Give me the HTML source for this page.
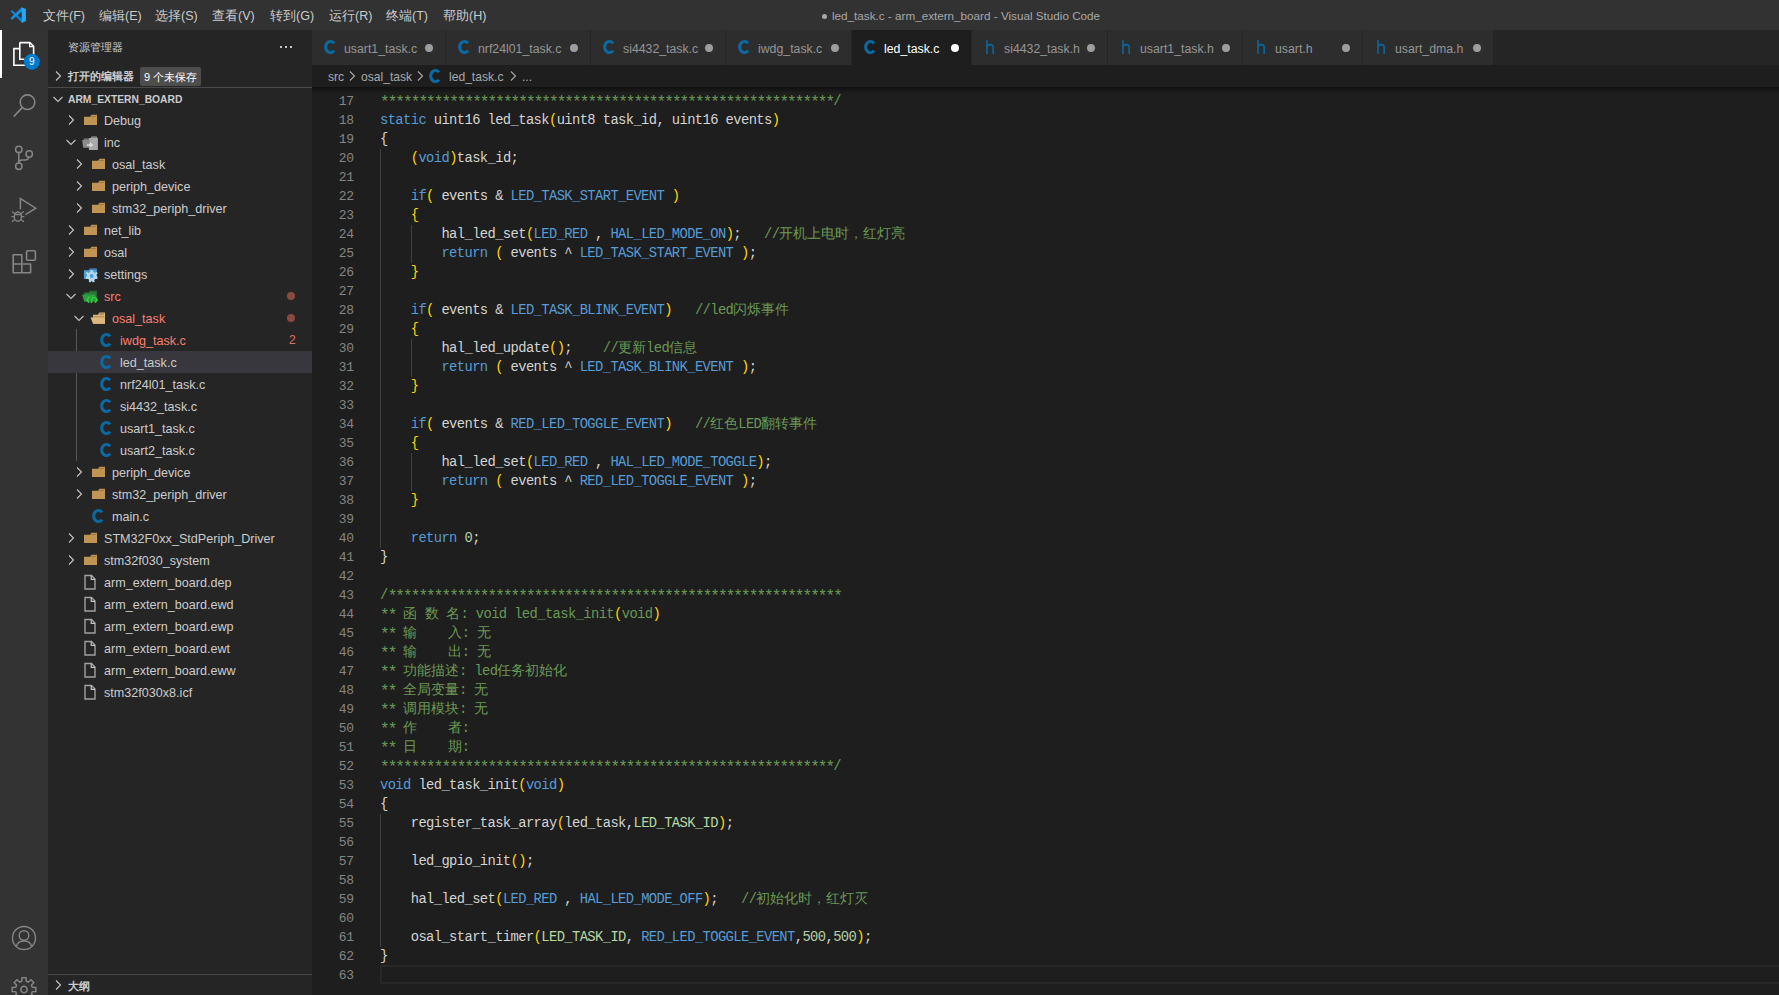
<!DOCTYPE html>
<html><head><meta charset="utf-8"><title>led_task.c - Visual Studio Code</title>
<style>
*{margin:0;padding:0;box-sizing:border-box}
html,body{width:1779px;height:995px;overflow:hidden;background:#1e1e1e;font-family:"Liberation Sans",sans-serif}
.ic{position:absolute;overflow:visible}
.cj{display:inline-block;white-space:nowrap;overflow:visible}
#title{position:absolute;left:0;top:0;width:1779px;height:30px;background:#323233}
.mi{position:absolute;top:1px;height:30px;line-height:30px;font-size:12.5px;color:#cccccc;white-space:nowrap}
#wtitle{position:absolute;left:821px;top:0px;width:280px;height:30px;line-height:31px;font-size:11.7px;color:#a8a8a8;white-space:nowrap}
#act{position:absolute;left:0;top:30px;width:48px;height:965px;background:#333333}
#side{position:absolute;left:48px;top:30px;width:264px;height:965px;background:#252526}
.tt{position:absolute;height:22px;line-height:24px;font-size:12.6px;white-space:nowrap}
.sel{position:absolute;left:48px;width:264px;height:22px;background:#37373d}
.gdot{position:absolute;left:287px;width:8px;height:8px;border-radius:4px;background:#8b4a40}
.tnum{position:absolute;left:289px;height:22px;line-height:22px;font-size:12px;color:#e07060}
.cico{position:absolute;font-family:"Liberation Sans",sans-serif;font-weight:bold;font-size:17px;line-height:22px;color:#0e70ad}
.hico{position:absolute;font-family:"Liberation Sans",sans-serif;font-size:17px;line-height:20px;color:#0b68a0}
#tabbar{position:absolute;left:312px;top:30px;width:1467px;height:35px;background:#252526}
.tab{position:absolute;top:30px;height:35px;background:#2d2d2d}
.tab.act{background:#1e1e1e}
.tabt{position:absolute;top:2px;line-height:35px;font-size:12.3px;color:#969696;white-space:nowrap}
.tab.act .tabt{color:#ffffff}
.tdot{position:absolute;top:14px;width:8px;height:8px;border-radius:4px;background:#9d9d9d}
.tab.act .tdot{background:#ffffff}
#crumb{position:absolute;left:312px;top:65px;width:1467px;height:22px;background:#1e1e1e;font-size:12.1px;color:#a9a9a9;line-height:24px;white-space:nowrap}
#editor{position:absolute;left:312px;top:87px;width:1467px;height:908px;background:#1e1e1e;overflow:hidden}
.ln{position:absolute;left:312px;width:42px;text-align:right;height:19px;line-height:19px;font-family:"Liberation Mono",monospace;font-size:13px;letter-spacing:-0.12px;color:#858585}
.cl{position:absolute;left:380px;height:19px;line-height:19px;font-family:"Liberation Mono",monospace;font-size:13.8px;letter-spacing:-0.6px;color:#d4d4d4;white-space:pre}
.cl .cj{letter-spacing:0;font-size:14px}
.kw,.mc{color:#569cd6}
.cm{color:#6a9955}
.nu{color:#b5cea8}
.en{color:#b8d7a3}
.br{color:#ffd700}
.ig{position:absolute;width:1px;background:#404040}
.ast{font-size:16px;letter-spacing:-1.92px;position:relative;top:2px}
</style></head><body>
<div id="title">
 <svg class="ic" style="left:0;top:0" width="40" height="30" viewBox="0 0 40 30">
  <path d="M10.4 11.2 L12.3 10 L22.2 19.3 L22.2 23 Z" fill="#0e80cc"/>
  <path d="M21.8 7.2 L22.2 11.2 L12.3 19.8 L10.4 18.3 Z" fill="#1490dd"/>
  <path d="M21.7 7.2 L25.9 9.1 V20.9 L21.7 22.9 Z" fill="#24a8f2"/>
 </svg>
 <div class="mi" style="left:43px"><span class="cj" style="width:26px">文件</span>(F)</div><div class="mi" style="left:99px"><span class="cj" style="width:26px">编辑</span>(E)</div><div class="mi" style="left:155px"><span class="cj" style="width:26px">选择</span>(S)</div><div class="mi" style="left:212px"><span class="cj" style="width:26px">查看</span>(V)</div><div class="mi" style="left:270px"><span class="cj" style="width:26px">转到</span>(G)</div><div class="mi" style="left:329px"><span class="cj" style="width:26px">运行</span>(R)</div><div class="mi" style="left:386px"><span class="cj" style="width:26px">终端</span>(T)</div><div class="mi" style="left:443px"><span class="cj" style="width:26px">帮助</span>(H)</div>
 <div style="position:absolute;left:822px;top:14px;width:5px;height:5px;border-radius:3px;background:#a8a8a8"></div><div id="wtitle" style="left:832px">led_task.c - arm_extern_board - Visual Studio Code</div>
</div>

<div id="act">
 <div style="position:absolute;left:0;top:0;width:2px;height:48px;background:#fff"></div>
 <svg class="ic" style="left:0;top:0" width="48" height="48" viewBox="0 0 48 48">
  <path d="M13.8 18.5 H19.5 M13.8 18.5 V64.5 M13.8 64.5" fill="none"/>
  <path d="M19.8 18.6 H13.9 V35.2 H25" fill="none" stroke="#fff" stroke-width="1.6"/>
  <path d="M19.8 12.6 H29.8 L33.6 16.4 V29 M19.8 12.6 V29.2 H24.5" fill="none" stroke="#fff" stroke-width="1.6"/>
  <path d="M29.6 12.8 V16.6 H33.4" fill="none" stroke="#fff" stroke-width="1.2"/>
  <circle cx="31.8" cy="31.8" r="8" fill="#007acc"/>
  <text x="31.8" y="35.4" text-anchor="middle" font-family="Liberation Sans" font-size="10" fill="#fff">9</text>
 </svg>
 <svg class="ic" style="left:0;top:50px" width="48" height="48" viewBox="0 0 48 48">
  <circle cx="27.5" cy="22.2" r="7.3" fill="none" stroke="#858585" stroke-width="1.6"/>
  <path d="M22.2 27.6 L13.8 36.5" stroke="#858585" stroke-width="1.8"/>
 </svg>
 <svg class="ic" style="left:0;top:102px" width="48" height="48" viewBox="0 0 48 48">
  <circle cx="18.8" cy="17.4" r="3.2" fill="none" stroke="#858585" stroke-width="1.5"/>
  <circle cx="18.8" cy="34.2" r="3.2" fill="none" stroke="#858585" stroke-width="1.5"/>
  <circle cx="29.2" cy="22" r="3.2" fill="none" stroke="#858585" stroke-width="1.5"/>
  <path d="M18.8 20.6 V31 M28.8 25.2 Q28.3 28 25.5 28 H22 Q19 28 19 30.5" fill="none" stroke="#858585" stroke-width="1.5"/>
 </svg>
 <svg class="ic" style="left:0;top:155px" width="48" height="48" viewBox="0 0 48 48">
  <path d="M20.4 24.3 V13.6 L35.8 23.2 L25.4 29.6" fill="none" stroke="#858585" stroke-width="1.5"/>
  <ellipse cx="17.9" cy="31.6" rx="3.6" ry="4.6" fill="none" stroke="#858585" stroke-width="1.4"/>
  <path d="M14.4 29.5 H21.4 M12 26.5 L14.6 28.4 M23.8 26.5 L21.2 28.4 M11.5 31.6 H14.3 M21.5 31.6 H24.3 M12 36.6 L14.6 34.8 M23.8 36.6 L21.2 34.8" fill="none" stroke="#858585" stroke-width="1.3"/>
 </svg>
 <svg class="ic" style="left:0;top:208px" width="48" height="48" viewBox="0 0 48 48">
  <path d="M13.2 16.7 H21.8 V26 H30.6 V34.8 H13.2 Z M13.2 26 H21.8 V34.8" fill="none" stroke="#858585" stroke-width="1.6" stroke-linejoin="round"/>
  <rect x="26.6" y="12.8" width="8.8" height="9.4" rx="1" fill="none" stroke="#858585" stroke-width="1.6"/>
 </svg>
 <svg class="ic" style="left:0;top:884px" width="48" height="48" viewBox="0 0 48 48">
  <circle cx="24" cy="24" r="11.5" fill="none" stroke="#858585" stroke-width="1.4"/>
  <circle cx="24" cy="21.5" r="4.8" fill="none" stroke="#858585" stroke-width="1.4"/>
  <path d="M16.4 32.5 Q17.5 27 24 27 Q30.5 27 31.6 32.5" fill="none" stroke="#858585" stroke-width="1.4"/>
 </svg>
 <svg class="ic" style="left:0;top:935px" width="48" height="48" viewBox="0 0 48 48">
  <g transform="translate(24 24.5)">
   <path d="M-2.23 -8.31 L-1.98 -11.84 L1.98 -11.84 L2.23 -8.31 L4.30 -7.45 L6.97 -9.77 L9.77 -6.97 L7.45 -4.30 L8.31 -2.23 L11.84 -1.98 L11.84 1.98 L8.31 2.23 L7.45 4.30 L9.77 6.97 L6.97 9.77 L4.30 7.45 L2.23 8.31 L1.98 11.84 L-1.98 11.84 L-2.23 8.31 L-4.30 7.45 L-6.97 9.77 L-9.77 6.97 L-7.45 4.30 L-8.31 2.23 L-11.84 1.98 L-11.84 -1.98 L-8.31 -2.23 L-7.45 -4.30 L-9.77 -6.97 L-6.97 -9.77 L-4.30 -7.45 Z" fill="none" stroke="#858585" stroke-width="1.5" stroke-linejoin="miter"/>
   <circle cx="0" cy="0" r="3.2" fill="none" stroke="#858585" stroke-width="1.5"/>
  </g>
 </svg>
</div>
<div id="side">
 <div style="position:absolute;left:20px;top:0;height:35px;line-height:35px;font-size:11px;color:#cccccc"><span class="cj" style="width:55px">资源管理器</span></div>
 <div style="position:absolute;left:232px;top:16px;width:2px;height:2px;background:#c5c5c5;box-shadow:5px 0 0 #c5c5c5,10px 0 0 #c5c5c5"></div>
</div>
<svg class="ic" style="left:50px;top:68px" width="16" height="16" viewBox="0 0 16 16"><path d="M6 3.5 L10.5 8 L6 12.5" fill="none" stroke="#c5c5c5" stroke-width="1.1"/></svg>
<div style="position:absolute;left:68px;top:65px;height:22px;line-height:22px;font-size:11px;font-weight:bold;color:#cccccc"><span class="cj" style="width:66px">打开的编辑器</span></div>
<div style="position:absolute;left:140px;top:67px;width:61px;height:19px;background:#4d4d4d;border-radius:2px;font-size:11px;line-height:20px;color:#ffffff;padding-left:4px;white-space:nowrap">9 <span class="cj" style="width:46px">个未保存</span></div>
<div style="position:absolute;left:48px;top:87px;width:264px;height:1px;background:#4a4a4a"></div>
<svg class="ic" style="left:50px;top:91px" width="16" height="16" viewBox="0 0 16 16"><path d="M3.5 6 L8 10.5 L12.5 6" fill="none" stroke="#c5c5c5" stroke-width="1.1"/></svg>
<div style="position:absolute;left:68px;top:89px;height:22px;line-height:22px;font-size:10.3px;font-weight:bold;color:#cccccc">ARM_EXTERN_BOARD</div>
<div style="position:absolute;left:76px;top:329px;width:1px;height:132px;background:#585858"></div>
<svg class="ic" style="left:63px;top:112px" width="16" height="16" viewBox="0 0 16 16"><path d="M6 3.5 L10.5 8 L6 12.5" fill="none" stroke="#c5c5c5" stroke-width="1.1"/></svg><svg class="ic" style="left:82px;top:112px" width="16" height="16" viewBox="0 0 16 16"><path d="M2 4.8 H8.2 L9.4 2.7 H15 V13 H2 Z" fill="#c09553"/><path d="M9.6 3.9 H14 V4.7 H9.2z" fill="#8e7040"/></svg><div class="tt" style="left:104px;top:109px;color:#cccccc">Debug</div><svg class="ic" style="left:63px;top:134px" width="16" height="16" viewBox="0 0 16 16"><path d="M3.5 6 L8 10.5 L12.5 6" fill="none" stroke="#c5c5c5" stroke-width="1.1"/></svg><svg class="ic" style="left:82px;top:134px" width="16" height="16" viewBox="0 0 16 16"><path d="M6.9 4 H8.9 L9.6 2.6 H14.9 V4 H15.9 V15.9 H6.9 Z" fill="#a9a9a9"/><path d="M9.8 3.2 H14.4 V3.9 H9.8z" fill="#6e6e6e"/><path d="M0.2 6 H1.5 L2.2 4.6 H7.3 V13.7 H1.2 Z" fill="#8c8c8c"/><path d="M2.3 5.3 H6.6 V6 H2.3z" fill="#5e5e5e"/><path d="M4.9 10.9 H9.6 M8 9.2 L10.2 10.9 L8 12.6" stroke="#dadada" stroke-width="1.5" fill="none"/></svg><div class="tt" style="left:104px;top:131px;color:#cccccc">inc</div><svg class="ic" style="left:71px;top:156px" width="16" height="16" viewBox="0 0 16 16"><path d="M6 3.5 L10.5 8 L6 12.5" fill="none" stroke="#c5c5c5" stroke-width="1.1"/></svg><svg class="ic" style="left:90px;top:156px" width="16" height="16" viewBox="0 0 16 16"><path d="M2 4.8 H8.2 L9.4 2.7 H15 V13 H2 Z" fill="#c09553"/><path d="M9.6 3.9 H14 V4.7 H9.2z" fill="#8e7040"/></svg><div class="tt" style="left:112px;top:153px;color:#cccccc">osal_task</div><svg class="ic" style="left:71px;top:178px" width="16" height="16" viewBox="0 0 16 16"><path d="M6 3.5 L10.5 8 L6 12.5" fill="none" stroke="#c5c5c5" stroke-width="1.1"/></svg><svg class="ic" style="left:90px;top:178px" width="16" height="16" viewBox="0 0 16 16"><path d="M2 4.8 H8.2 L9.4 2.7 H15 V13 H2 Z" fill="#c09553"/><path d="M9.6 3.9 H14 V4.7 H9.2z" fill="#8e7040"/></svg><div class="tt" style="left:112px;top:175px;color:#cccccc">periph_device</div><svg class="ic" style="left:71px;top:200px" width="16" height="16" viewBox="0 0 16 16"><path d="M6 3.5 L10.5 8 L6 12.5" fill="none" stroke="#c5c5c5" stroke-width="1.1"/></svg><svg class="ic" style="left:90px;top:200px" width="16" height="16" viewBox="0 0 16 16"><path d="M2 4.8 H8.2 L9.4 2.7 H15 V13 H2 Z" fill="#c09553"/><path d="M9.6 3.9 H14 V4.7 H9.2z" fill="#8e7040"/></svg><div class="tt" style="left:112px;top:197px;color:#cccccc">stm32_periph_driver</div><svg class="ic" style="left:63px;top:222px" width="16" height="16" viewBox="0 0 16 16"><path d="M6 3.5 L10.5 8 L6 12.5" fill="none" stroke="#c5c5c5" stroke-width="1.1"/></svg><svg class="ic" style="left:82px;top:222px" width="16" height="16" viewBox="0 0 16 16"><path d="M2 4.8 H8.2 L9.4 2.7 H15 V13 H2 Z" fill="#c09553"/><path d="M9.6 3.9 H14 V4.7 H9.2z" fill="#8e7040"/></svg><div class="tt" style="left:104px;top:219px;color:#cccccc">net_lib</div><svg class="ic" style="left:63px;top:244px" width="16" height="16" viewBox="0 0 16 16"><path d="M6 3.5 L10.5 8 L6 12.5" fill="none" stroke="#c5c5c5" stroke-width="1.1"/></svg><svg class="ic" style="left:82px;top:244px" width="16" height="16" viewBox="0 0 16 16"><path d="M2 4.8 H8.2 L9.4 2.7 H15 V13 H2 Z" fill="#c09553"/><path d="M9.6 3.9 H14 V4.7 H9.2z" fill="#8e7040"/></svg><div class="tt" style="left:104px;top:241px;color:#cccccc">osal</div><svg class="ic" style="left:63px;top:266px" width="16" height="16" viewBox="0 0 16 16"><path d="M6 3.5 L10.5 8 L6 12.5" fill="none" stroke="#c5c5c5" stroke-width="1.1"/></svg><svg class="ic" style="left:82px;top:266px" width="16" height="16" viewBox="0 0 16 16"><path d="M1.9 4.2 H6.8 L7.8 2.5 H14.8 V13 H1.9 Z" fill="#4b9fd6"/><path d="M8 3.3 H14.2 V4 H8z" fill="#2f78a8"/><g transform="translate(9.7 10)"><path d="M-1.2 -5.8 H1.2 L1.6 -3.9 L3.3 -3.1 L4.9 -4.2 L6 -2.6 L4.6 -1.2 L4.8 0 L6 1.2 L5.3 2.9 L3.4 2.9 L2.6 4.3 L2.9 6 L1 6.2 L0 4.8 L-1 6.2 L-2.9 6 L-2.6 4.3 L-3.4 2.9 L-5.3 2.9 L-6 1.2 L-4.8 0 L-4.6 -1.2 L-6 -2.6 L-4.9 -4.2 L-3.3 -3.1 L-1.6 -3.9 Z" fill="#b3d7ee"/><circle r="1.9" fill="#4b9fd6"/></g></svg><div class="tt" style="left:104px;top:263px;color:#cccccc">settings</div><svg class="ic" style="left:63px;top:288px" width="16" height="16" viewBox="0 0 16 16"><path d="M3.5 6 L8 10.5 L12.5 6" fill="none" stroke="#c5c5c5" stroke-width="1.1"/></svg><svg class="ic" style="left:82px;top:288px" width="16" height="16" viewBox="0 0 16 16"><path d="M2.2 4.6 H7 L8 2.7 H14.8 V13.6 H2.2 Z" fill="#2a7a36"/><path d="M8.2 3.5 H14.2 V4.2 H8.2z" fill="#1d5a28"/><path d="M0.1 6.6 H12.6 L14.8 13.6 H2.2 Z" fill="#339944"/><path d="M7.2 9 L4.9 11.9 L7.2 14.8 M12.9 9 L15.2 11.9 L12.9 14.8 M10.9 8.6 L9.3 15.2" stroke="#1fe02f" stroke-width="1.4" fill="none"/></svg><div class="tt" style="left:104px;top:285px;color:#f88070">src</div><div class="gdot" style="top:292px"></div><svg class="ic" style="left:71px;top:310px" width="16" height="16" viewBox="0 0 16 16"><path d="M3.5 6 L8 10.5 L12.5 6" fill="none" stroke="#c5c5c5" stroke-width="1.1"/></svg><svg class="ic" style="left:90px;top:310px" width="16" height="16" viewBox="0 0 16 16"><path d="M3 4.8 H8 L9.2 2.5 H15 V13.8 H3 Z" fill="#dcb67a"/><path d="M9.4 3.6 H14 V4.4 H9z M3.6 6.4 H14.2 V7.2 H3.6z" fill="#8e7040"/><path d="M0.5 7.6 H12.4 L15 13.8 H3 Z" fill="#dcb67a"/></svg><div class="tt" style="left:112px;top:307px;color:#f88070">osal_task</div><div class="gdot" style="top:314px"></div><svg class="ic" style="left:98px;top:329px" width="16" height="22" viewBox="0 0 16 22"><path d="M13.4 6.7 A6.3 7 0 1 0 13.4 15.3 L10.5 14 A3.1 4 0 1 1 10.5 8 Z" fill="#0b6aa3"/></svg><div class="tt" style="left:120px;top:329px;color:#f88070">iwdg_task.c</div><div class="tnum" style="top:329px">2</div><div class="sel" style="top:351px"></div><svg class="ic" style="left:98px;top:351px" width="16" height="22" viewBox="0 0 16 22"><path d="M13.4 6.7 A6.3 7 0 1 0 13.4 15.3 L10.5 14 A3.1 4 0 1 1 10.5 8 Z" fill="#0b6aa3"/></svg><div class="tt" style="left:120px;top:351px;color:#cccccc">led_task.c</div><svg class="ic" style="left:98px;top:373px" width="16" height="22" viewBox="0 0 16 22"><path d="M13.4 6.7 A6.3 7 0 1 0 13.4 15.3 L10.5 14 A3.1 4 0 1 1 10.5 8 Z" fill="#0b6aa3"/></svg><div class="tt" style="left:120px;top:373px;color:#cccccc">nrf24l01_task.c</div><svg class="ic" style="left:98px;top:395px" width="16" height="22" viewBox="0 0 16 22"><path d="M13.4 6.7 A6.3 7 0 1 0 13.4 15.3 L10.5 14 A3.1 4 0 1 1 10.5 8 Z" fill="#0b6aa3"/></svg><div class="tt" style="left:120px;top:395px;color:#cccccc">si4432_task.c</div><svg class="ic" style="left:98px;top:417px" width="16" height="22" viewBox="0 0 16 22"><path d="M13.4 6.7 A6.3 7 0 1 0 13.4 15.3 L10.5 14 A3.1 4 0 1 1 10.5 8 Z" fill="#0b6aa3"/></svg><div class="tt" style="left:120px;top:417px;color:#cccccc">usart1_task.c</div><svg class="ic" style="left:98px;top:439px" width="16" height="22" viewBox="0 0 16 22"><path d="M13.4 6.7 A6.3 7 0 1 0 13.4 15.3 L10.5 14 A3.1 4 0 1 1 10.5 8 Z" fill="#0b6aa3"/></svg><div class="tt" style="left:120px;top:439px;color:#cccccc">usart2_task.c</div><svg class="ic" style="left:71px;top:464px" width="16" height="16" viewBox="0 0 16 16"><path d="M6 3.5 L10.5 8 L6 12.5" fill="none" stroke="#c5c5c5" stroke-width="1.1"/></svg><svg class="ic" style="left:90px;top:464px" width="16" height="16" viewBox="0 0 16 16"><path d="M2 4.8 H8.2 L9.4 2.7 H15 V13 H2 Z" fill="#c09553"/><path d="M9.6 3.9 H14 V4.7 H9.2z" fill="#8e7040"/></svg><div class="tt" style="left:112px;top:461px;color:#cccccc">periph_device</div><svg class="ic" style="left:71px;top:486px" width="16" height="16" viewBox="0 0 16 16"><path d="M6 3.5 L10.5 8 L6 12.5" fill="none" stroke="#c5c5c5" stroke-width="1.1"/></svg><svg class="ic" style="left:90px;top:486px" width="16" height="16" viewBox="0 0 16 16"><path d="M2 4.8 H8.2 L9.4 2.7 H15 V13 H2 Z" fill="#c09553"/><path d="M9.6 3.9 H14 V4.7 H9.2z" fill="#8e7040"/></svg><div class="tt" style="left:112px;top:483px;color:#cccccc">stm32_periph_driver</div><svg class="ic" style="left:90px;top:505px" width="16" height="22" viewBox="0 0 16 22"><path d="M13.4 6.7 A6.3 7 0 1 0 13.4 15.3 L10.5 14 A3.1 4 0 1 1 10.5 8 Z" fill="#0b6aa3"/></svg><div class="tt" style="left:112px;top:505px;color:#cccccc">main.c</div><svg class="ic" style="left:63px;top:530px" width="16" height="16" viewBox="0 0 16 16"><path d="M6 3.5 L10.5 8 L6 12.5" fill="none" stroke="#c5c5c5" stroke-width="1.1"/></svg><svg class="ic" style="left:82px;top:530px" width="16" height="16" viewBox="0 0 16 16"><path d="M2 4.8 H8.2 L9.4 2.7 H15 V13 H2 Z" fill="#c09553"/><path d="M9.6 3.9 H14 V4.7 H9.2z" fill="#8e7040"/></svg><div class="tt" style="left:104px;top:527px;color:#cccccc">STM32F0xx_StdPeriph_Driver</div><svg class="ic" style="left:63px;top:552px" width="16" height="16" viewBox="0 0 16 16"><path d="M6 3.5 L10.5 8 L6 12.5" fill="none" stroke="#c5c5c5" stroke-width="1.1"/></svg><svg class="ic" style="left:82px;top:552px" width="16" height="16" viewBox="0 0 16 16"><path d="M2 4.8 H8.2 L9.4 2.7 H15 V13 H2 Z" fill="#c09553"/><path d="M9.6 3.9 H14 V4.7 H9.2z" fill="#8e7040"/></svg><div class="tt" style="left:104px;top:549px;color:#cccccc">stm32f030_system</div><svg class="ic" style="left:82px;top:574px" width="16" height="16" viewBox="0 0 16 16"><path d="M3 1.5 H9.5 L13 5 V15 H3 Z" fill="none" stroke="#a0a0a0" stroke-width="1.4"/><path d="M9.2 1.5 V5.3 H13" fill="none" stroke="#c5c5c5" stroke-width="1.2"/></svg><div class="tt" style="left:104px;top:571px;color:#cccccc">arm_extern_board.dep</div><svg class="ic" style="left:82px;top:596px" width="16" height="16" viewBox="0 0 16 16"><path d="M3 1.5 H9.5 L13 5 V15 H3 Z" fill="none" stroke="#a0a0a0" stroke-width="1.4"/><path d="M9.2 1.5 V5.3 H13" fill="none" stroke="#c5c5c5" stroke-width="1.2"/></svg><div class="tt" style="left:104px;top:593px;color:#cccccc">arm_extern_board.ewd</div><svg class="ic" style="left:82px;top:618px" width="16" height="16" viewBox="0 0 16 16"><path d="M3 1.5 H9.5 L13 5 V15 H3 Z" fill="none" stroke="#a0a0a0" stroke-width="1.4"/><path d="M9.2 1.5 V5.3 H13" fill="none" stroke="#c5c5c5" stroke-width="1.2"/></svg><div class="tt" style="left:104px;top:615px;color:#cccccc">arm_extern_board.ewp</div><svg class="ic" style="left:82px;top:640px" width="16" height="16" viewBox="0 0 16 16"><path d="M3 1.5 H9.5 L13 5 V15 H3 Z" fill="none" stroke="#a0a0a0" stroke-width="1.4"/><path d="M9.2 1.5 V5.3 H13" fill="none" stroke="#c5c5c5" stroke-width="1.2"/></svg><div class="tt" style="left:104px;top:637px;color:#cccccc">arm_extern_board.ewt</div><svg class="ic" style="left:82px;top:662px" width="16" height="16" viewBox="0 0 16 16"><path d="M3 1.5 H9.5 L13 5 V15 H3 Z" fill="none" stroke="#a0a0a0" stroke-width="1.4"/><path d="M9.2 1.5 V5.3 H13" fill="none" stroke="#c5c5c5" stroke-width="1.2"/></svg><div class="tt" style="left:104px;top:659px;color:#cccccc">arm_extern_board.eww</div><svg class="ic" style="left:82px;top:684px" width="16" height="16" viewBox="0 0 16 16"><path d="M3 1.5 H9.5 L13 5 V15 H3 Z" fill="none" stroke="#a0a0a0" stroke-width="1.4"/><path d="M9.2 1.5 V5.3 H13" fill="none" stroke="#c5c5c5" stroke-width="1.2"/></svg><div class="tt" style="left:104px;top:681px;color:#cccccc">stm32f030x8.icf</div>
<div style="position:absolute;left:48px;top:974px;width:264px;height:1px;background:#4a4a4a"></div>
<svg class="ic" style="left:50px;top:977px" width="16" height="16" viewBox="0 0 16 16"><path d="M6 3.5 L10.5 8 L6 12.5" fill="none" stroke="#c5c5c5" stroke-width="1.1"/></svg>
<div style="position:absolute;left:68px;top:975px;height:22px;line-height:22px;font-size:11px;font-weight:bold;color:#cccccc"><span class="cj" style="width:24px">大纲</span></div>

<div id="tabbar"></div>
<div class="tab" style="left:312px;width:133px"><svg class="ic" style="left:10px;top:6px" width="16" height="22" viewBox="0 0 16 22"><path d="M13.4 6.7 A6.3 7 0 1 0 13.4 15.3 L10.5 14 A3.1 4 0 1 1 10.5 8 Z" fill="#0b6aa3"/></svg><span class="tabt" style="left:32px">usart1_task.c</span><span class="tdot" style="left:113px"></span></div><div class="tab" style="left:446px;width:144px"><svg class="ic" style="left:10px;top:6px" width="16" height="22" viewBox="0 0 16 22"><path d="M13.4 6.7 A6.3 7 0 1 0 13.4 15.3 L10.5 14 A3.1 4 0 1 1 10.5 8 Z" fill="#0b6aa3"/></svg><span class="tabt" style="left:32px">nrf24l01_task.c</span><span class="tdot" style="left:124px"></span></div><div class="tab" style="left:591px;width:134px"><svg class="ic" style="left:10px;top:6px" width="16" height="22" viewBox="0 0 16 22"><path d="M13.4 6.7 A6.3 7 0 1 0 13.4 15.3 L10.5 14 A3.1 4 0 1 1 10.5 8 Z" fill="#0b6aa3"/></svg><span class="tabt" style="left:32px">si4432_task.c</span><span class="tdot" style="left:114px"></span></div><div class="tab" style="left:726px;width:125px"><svg class="ic" style="left:10px;top:6px" width="16" height="22" viewBox="0 0 16 22"><path d="M13.4 6.7 A6.3 7 0 1 0 13.4 15.3 L10.5 14 A3.1 4 0 1 1 10.5 8 Z" fill="#0b6aa3"/></svg><span class="tabt" style="left:32px">iwdg_task.c</span><span class="tdot" style="left:105px"></span></div><div class="tab act" style="left:852px;width:119px"><svg class="ic" style="left:10px;top:6px" width="16" height="22" viewBox="0 0 16 22"><path d="M13.4 6.7 A6.3 7 0 1 0 13.4 15.3 L10.5 14 A3.1 4 0 1 1 10.5 8 Z" fill="#0b6aa3"/></svg><span class="tabt" style="left:32px">led_task.c</span><span class="tdot" style="left:99px"></span></div><div class="tab" style="left:972px;width:135px"><svg class="ic" style="left:12px;top:9px" width="12" height="16" viewBox="0 0 12 16"><path d="M3 1 V15 M3 8.5 Q3 5.6 6.2 5.6 Q9.2 5.6 9.2 8.6 V15" fill="none" stroke="#0c649a" stroke-width="1.7"/></svg><span class="tabt" style="left:32px">si4432_task.h</span><span class="tdot" style="left:115px"></span></div><div class="tab" style="left:1108px;width:134px"><svg class="ic" style="left:12px;top:9px" width="12" height="16" viewBox="0 0 12 16"><path d="M3 1 V15 M3 8.5 Q3 5.6 6.2 5.6 Q9.2 5.6 9.2 8.6 V15" fill="none" stroke="#0c649a" stroke-width="1.7"/></svg><span class="tabt" style="left:32px">usart1_task.h</span><span class="tdot" style="left:114px"></span></div><div class="tab" style="left:1243px;width:119px"><svg class="ic" style="left:12px;top:9px" width="12" height="16" viewBox="0 0 12 16"><path d="M3 1 V15 M3 8.5 Q3 5.6 6.2 5.6 Q9.2 5.6 9.2 8.6 V15" fill="none" stroke="#0c649a" stroke-width="1.7"/></svg><span class="tabt" style="left:32px">usart.h</span><span class="tdot" style="left:99px"></span></div><div class="tab" style="left:1363px;width:130px"><svg class="ic" style="left:12px;top:9px" width="12" height="16" viewBox="0 0 12 16"><path d="M3 1 V15 M3 8.5 Q3 5.6 6.2 5.6 Q9.2 5.6 9.2 8.6 V15" fill="none" stroke="#0c649a" stroke-width="1.7"/></svg><span class="tabt" style="left:32px">usart_dma.h</span><span class="tdot" style="left:110px"></span></div>
<div id="crumb">
 <span style="position:absolute;left:16px">src</span>
 <svg class="ic" style="left:32px;top:3px" width="16" height="16" viewBox="0 0 16 16"><path d="M6 3.5 L10.5 8 L6 12.5" fill="none" stroke="#a9a9a9" stroke-width="1.1"/></svg>
 <span style="position:absolute;left:49px">osal_task</span>
 <svg class="ic" style="left:100px;top:3px" width="16" height="16" viewBox="0 0 16 16"><path d="M6 3.5 L10.5 8 L6 12.5" fill="none" stroke="#a9a9a9" stroke-width="1.1"/></svg>
 <svg class="ic" style="left:115px;top:0px" width="16" height="22" viewBox="0 0 16 22"><path d="M13.4 6.7 A6.3 7 0 1 0 13.4 15.3 L10.5 14 A3.1 4 0 1 1 10.5 8 Z" fill="#0b6aa3"/></svg>
 <span style="position:absolute;left:137px">led_task.c</span>
 <svg class="ic" style="left:193px;top:3px" width="16" height="16" viewBox="0 0 16 16"><path d="M6 3.5 L10.5 8 L6 12.5" fill="none" stroke="#a9a9a9" stroke-width="1.1"/></svg>
 <span style="position:absolute;left:210px">...</span>
</div>
<div id="editor"></div>
<div style="position:absolute;left:312px;top:87px;width:1467px;height:6px;background:linear-gradient(rgba(0,0,0,0.5),rgba(0,0,0,0))"></div>
<div class="ig" style="left:380px;top:149px;height:399px"></div><div class="ig" style="left:411px;top:225px;height:38px"></div><div class="ig" style="left:411px;top:339px;height:38px"></div><div class="ig" style="left:411px;top:453px;height:38px"></div><div class="ig" style="left:380px;top:814px;height:133px"></div>
<div style="position:absolute;left:380px;top:965px;width:1399px;height:19px;border:2px solid #282828;border-right:none"></div>
<div class="ln" style="top:92px">17</div><div class="cl" style="top:92px"><span class="cm"><span class="ast">***********************************************************</span>/</span></div><div class="ln" style="top:111px">18</div><div class="cl" style="top:111px"><span class="kw">static</span> uint16 led_task<span class="br">(</span>uint8 task_id, uint16 events<span class="br">)</span></div><div class="ln" style="top:130px">19</div><div class="cl" style="top:130px">{</div><div class="ln" style="top:149px">20</div><div class="cl" style="top:149px">    <span class="br">(</span><span class="kw">void</span><span class="br">)</span>task_id;</div><div class="ln" style="top:168px">21</div><div class="cl" style="top:168px"></div><div class="ln" style="top:187px">22</div><div class="cl" style="top:187px">    <span class="kw">if</span><span class="br">(</span> events &amp; <span class="mc">LED_TASK_START_EVENT</span> <span class="br">)</span></div><div class="ln" style="top:206px">23</div><div class="cl" style="top:206px">    <span class="br">{</span></div><div class="ln" style="top:225px">24</div><div class="cl" style="top:225px">        hal_led_set<span class="br">(</span><span class="mc">LED_RED</span> , <span class="mc">HAL_LED_MODE_ON</span><span class="br">)</span>;   <span class="cm">//<span class="cj" style="width:126px">开机上电时，红灯亮</span></span></div><div class="ln" style="top:244px">25</div><div class="cl" style="top:244px">        <span class="kw">return</span> <span class="br">(</span> events ^ <span class="mc">LED_TASK_START_EVENT</span> <span class="br">)</span>;</div><div class="ln" style="top:263px">26</div><div class="cl" style="top:263px">    <span class="br">}</span></div><div class="ln" style="top:282px">27</div><div class="cl" style="top:282px"></div><div class="ln" style="top:301px">28</div><div class="cl" style="top:301px">    <span class="kw">if</span><span class="br">(</span> events &amp; <span class="mc">LED_TASK_BLINK_EVENT</span><span class="br">)</span>   <span class="cm">//led<span class="cj" style="width:56px">闪烁事件</span></span></div><div class="ln" style="top:320px">29</div><div class="cl" style="top:320px">    <span class="br">{</span></div><div class="ln" style="top:339px">30</div><div class="cl" style="top:339px">        hal_led_update<span class="br">(</span><span class="br">)</span>;    <span class="cm">//<span class="cj" style="width:28px">更新</span>led<span class="cj" style="width:28px">信息</span></span></div><div class="ln" style="top:358px">31</div><div class="cl" style="top:358px">        <span class="kw">return</span> <span class="br">(</span> events ^ <span class="mc">LED_TASK_BLINK_EVENT</span> <span class="br">)</span>;</div><div class="ln" style="top:377px">32</div><div class="cl" style="top:377px">    <span class="br">}</span></div><div class="ln" style="top:396px">33</div><div class="cl" style="top:396px"></div><div class="ln" style="top:415px">34</div><div class="cl" style="top:415px">    <span class="kw">if</span><span class="br">(</span> events &amp; <span class="mc">RED_LED_TOGGLE_EVENT</span><span class="br">)</span>   <span class="cm">//<span class="cj" style="width:28px">红色</span>LED<span class="cj" style="width:56px">翻转事件</span></span></div><div class="ln" style="top:434px">35</div><div class="cl" style="top:434px">    <span class="br">{</span></div><div class="ln" style="top:453px">36</div><div class="cl" style="top:453px">        hal_led_set<span class="br">(</span><span class="mc">LED_RED</span> , <span class="mc">HAL_LED_MODE_TOGGLE</span><span class="br">)</span>;</div><div class="ln" style="top:472px">37</div><div class="cl" style="top:472px">        <span class="kw">return</span> <span class="br">(</span> events ^ <span class="mc">RED_LED_TOGGLE_EVENT</span> <span class="br">)</span>;</div><div class="ln" style="top:491px">38</div><div class="cl" style="top:491px">    <span class="br">}</span></div><div class="ln" style="top:510px">39</div><div class="cl" style="top:510px"></div><div class="ln" style="top:529px">40</div><div class="cl" style="top:529px">    <span class="kw">return</span> <span class="nu">0</span>;</div><div class="ln" style="top:548px">41</div><div class="cl" style="top:548px">}</div><div class="ln" style="top:567px">42</div><div class="cl" style="top:567px"></div><div class="ln" style="top:586px">43</div><div class="cl" style="top:586px"><span class="cm">/<span class="ast">***********************************************************</span></span></div><div class="ln" style="top:605px">44</div><div class="cl" style="top:605px"><span class="cm"><span class="ast">**</span> <span class="cj" style="width:14px">函</span> <span class="cj" style="width:14px">数</span> <span class="cj" style="width:14px">名</span>: void led_task_init<span class="br">(</span>void<span class="br">)</span></span></div><div class="ln" style="top:624px">45</div><div class="cl" style="top:624px"><span class="cm"><span class="ast">**</span> <span class="cj" style="width:14px">输</span>    <span class="cj" style="width:14px">入</span>: <span class="cj" style="width:14px">无</span></span></div><div class="ln" style="top:643px">46</div><div class="cl" style="top:643px"><span class="cm"><span class="ast">**</span> <span class="cj" style="width:14px">输</span>    <span class="cj" style="width:14px">出</span>: <span class="cj" style="width:14px">无</span></span></div><div class="ln" style="top:662px">47</div><div class="cl" style="top:662px"><span class="cm"><span class="ast">**</span> <span class="cj" style="width:56px">功能描述</span>: led<span class="cj" style="width:70px">任务初始化</span></span></div><div class="ln" style="top:681px">48</div><div class="cl" style="top:681px"><span class="cm"><span class="ast">**</span> <span class="cj" style="width:56px">全局变量</span>: <span class="cj" style="width:14px">无</span></span></div><div class="ln" style="top:700px">49</div><div class="cl" style="top:700px"><span class="cm"><span class="ast">**</span> <span class="cj" style="width:56px">调用模块</span>: <span class="cj" style="width:14px">无</span></span></div><div class="ln" style="top:719px">50</div><div class="cl" style="top:719px"><span class="cm"><span class="ast">**</span> <span class="cj" style="width:14px">作</span>    <span class="cj" style="width:14px">者</span>:</span></div><div class="ln" style="top:738px">51</div><div class="cl" style="top:738px"><span class="cm"><span class="ast">**</span> <span class="cj" style="width:14px">日</span>    <span class="cj" style="width:14px">期</span>:</span></div><div class="ln" style="top:757px">52</div><div class="cl" style="top:757px"><span class="cm"><span class="ast">***********************************************************</span>/</span></div><div class="ln" style="top:776px">53</div><div class="cl" style="top:776px"><span class="kw">void</span> led_task_init<span class="br">(</span><span class="kw">void</span><span class="br">)</span></div><div class="ln" style="top:795px">54</div><div class="cl" style="top:795px">{</div><div class="ln" style="top:814px">55</div><div class="cl" style="top:814px">    register_task_array<span class="br">(</span>led_task,<span class="en">LED_TASK_ID</span><span class="br">)</span>;</div><div class="ln" style="top:833px">56</div><div class="cl" style="top:833px"></div><div class="ln" style="top:852px">57</div><div class="cl" style="top:852px">    led_gpio_init<span class="br">(</span><span class="br">)</span>;</div><div class="ln" style="top:871px">58</div><div class="cl" style="top:871px"></div><div class="ln" style="top:890px">59</div><div class="cl" style="top:890px">    hal_led_set<span class="br">(</span><span class="mc">LED_RED</span> , <span class="mc">HAL_LED_MODE_OFF</span><span class="br">)</span>;   <span class="cm">//<span class="cj" style="width:112px">初始化时，红灯灭</span></span></div><div class="ln" style="top:909px">60</div><div class="cl" style="top:909px"></div><div class="ln" style="top:928px">61</div><div class="cl" style="top:928px">    osal_start_timer<span class="br">(</span><span class="en">LED_TASK_ID</span>, <span class="mc">RED_LED_TOGGLE_EVENT</span>,<span class="nu">500</span>,<span class="nu">500</span><span class="br">)</span>;</div><div class="ln" style="top:947px">62</div><div class="cl" style="top:947px">}</div><div class="ln" style="top:966px">63</div><div class="cl" style="top:966px"></div>
</body></html>
